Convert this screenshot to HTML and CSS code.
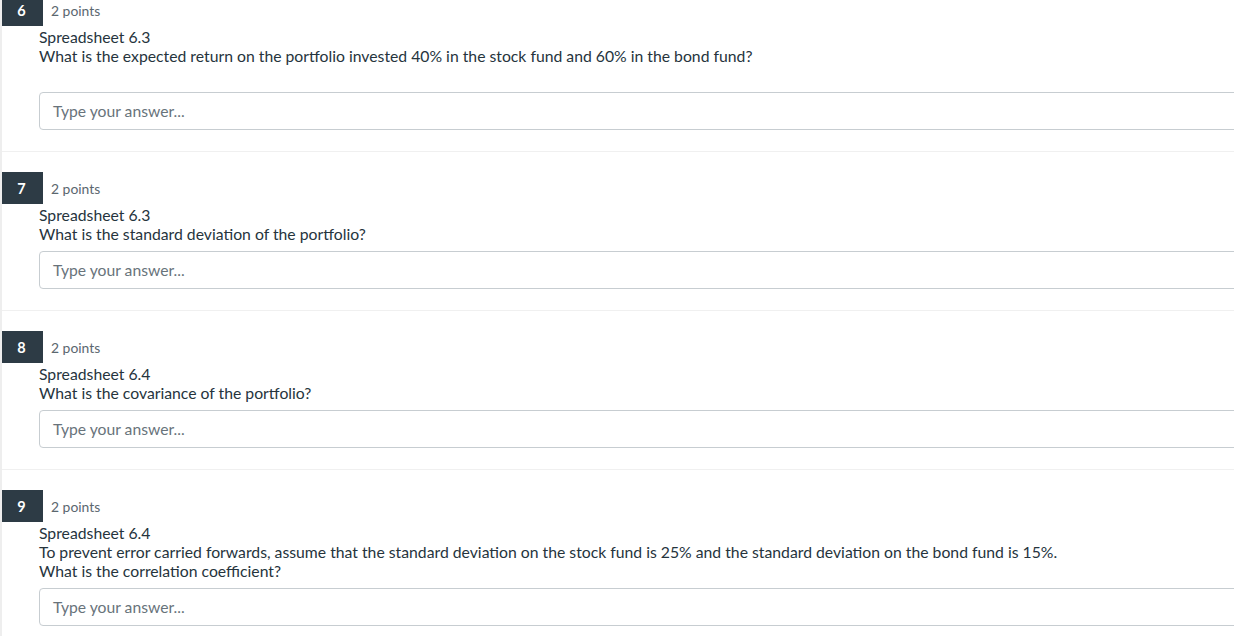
FILE: index.html
```html
<!DOCTYPE html>
<html>
<head>
<meta charset="utf-8">
<link rel="stylesheet" href="styles.css">
</head>
<body>
<div class="page">
  <div class="question first">
    <div class="qhead"><span class="badge">6</span><span class="points">2 points</span></div>
    <div class="qbody">
      <p class="qtext">Spreadsheet 6.3<br>What is the expected return on the portfolio invested 40% in the stock fund and 60% in the bond fund?<br>&nbsp;</p>
      <div class="answer">Type your answer...</div>
    </div>
  </div>
  <div class="question">
    <div class="qhead"><span class="badge">7</span><span class="points">2 points</span></div>
    <div class="qbody">
      <p class="qtext">Spreadsheet 6.3<br>What is the standard deviation of the portfolio?</p>
      <div class="answer">Type your answer...</div>
    </div>
  </div>
  <div class="question">
    <div class="qhead"><span class="badge">8</span><span class="points">2 points</span></div>
    <div class="qbody">
      <p class="qtext">Spreadsheet 6.4<br>What is the covariance of the portfolio?</p>
      <div class="answer">Type your answer...</div>
    </div>
  </div>
  <div class="question">
    <div class="qhead"><span class="badge">9</span><span class="points">2 points</span></div>
    <div class="qbody">
      <p class="qtext">Spreadsheet 6.4<br>To prevent error carried forwards, assume that the standard deviation on the stock fund is 25% and the standard deviation on the bond fund is 15%.<br>What is the correlation coefficient?</p>
      <div class="answer">Type your answer...</div>
    </div>
  </div>
</div>
</body>
</html>
```

FILE: styles.css
```css
html, body {
  margin: 0;
  padding: 0;
  background: #ffffff;
  overflow: hidden;
}
body {
  font-family: Lato, "Open Sans", "Liberation Sans", sans-serif;
  color: #2d3b45;
  width: 1234px;
  height: 636px;
}
.page {
  border-left: 2px solid #eeeeee;
  margin-top: -26px;
  height: 662px;
  overflow: hidden;
}
.question {
  padding: 20px 0 21px;
  border-bottom: 1px solid #f0f0f0;
}
.qhead {
  display: flex;
  align-items: center;
  gap: 8px;
  margin-left: -2px;
}
.badge {
  width: 43px;
  height: 32px;
  background: #2d3b45;
  color: #ffffff;
  font-weight: 700;
  font-size: 14.5px;
  display: flex;
  align-items: center;
  justify-content: center;
}
.points {
  font-size: 13.9px;
  color: #5b676f;
}
.qbody {
  margin-left: 37px;
}
.qtext {
  margin: 0;
  font-size: 15.75px;
  line-height: 19px;
  padding-top: 1px;
  color: #26343d;
}
.answer {
  margin-top: 8px;
  height: 36px;
  width: 1240px;
  border: 1px solid #c7cdd1;
  border-radius: 4px;
  box-sizing: content-box;
  display: flex;
  align-items: center;
  padding-left: 13px;
  font-size: 15.7px;
  color: #68737b;
}
```
